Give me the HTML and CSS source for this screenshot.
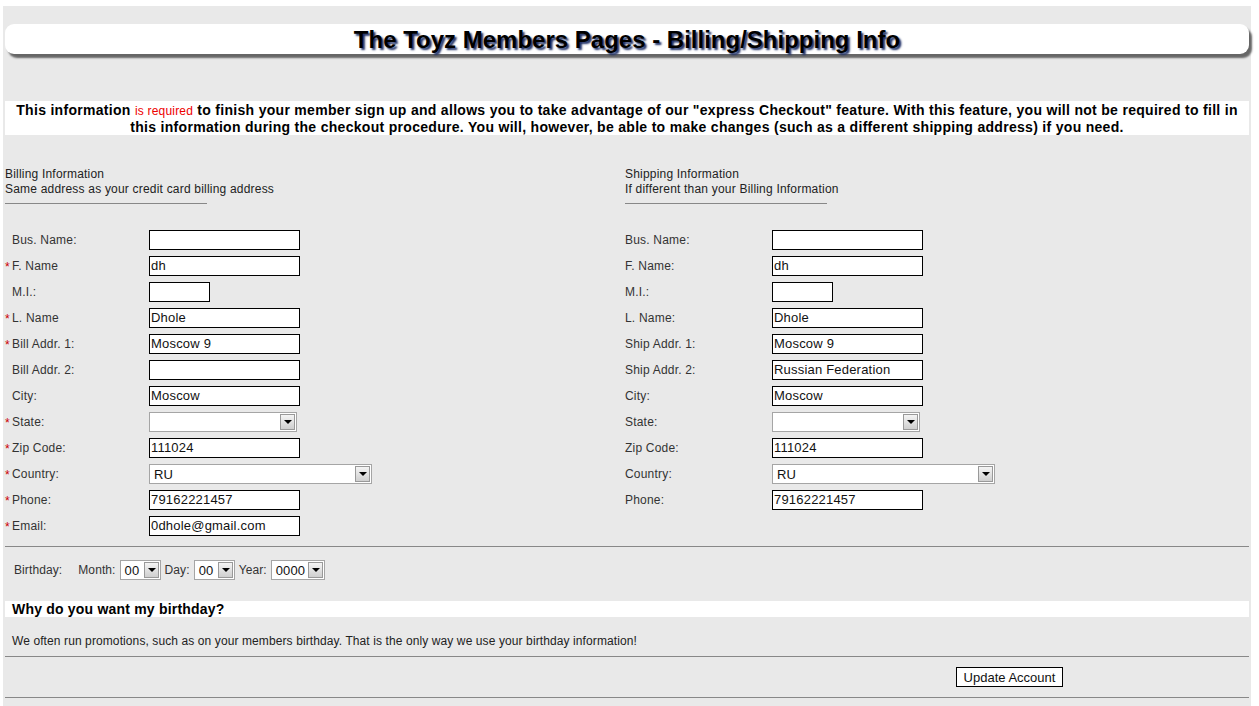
FILE: index.html
```html
<!DOCTYPE html>
<html lang="en">
<head>
    <meta charset="UTF-8">
    <title>The Toyz Members Pages - Billing/Shipping Info</title>
    <link rel="stylesheet" href="styles.css">
</head>
<body>
    <div class="page">
        <div class="title-bar">
            <h1>The Toyz Members Pages - Billing/Shipping Info</h1>
        </div>

        <p class="intro">This information <span class="req-text">is required</span> to finish your member sign up and allows you to take advantage of our "express Checkout" feature. With this feature, you will not be required to fill in<br>this information during the checkout procedure. You will, however, be able to make changes (such as a different shipping address) if you need.</p>

        <div class="columns">
            <div class="col">
                <div class="col-head">
                    Billing Information<br>
                    Same address as your credit card billing address
                </div>
                <div class="rows">
                    <div class="row"><span class="lbl">Bus. Name:</span><span class="field"></span></div>
                    <div class="row"><span class="lbl req">F. Name</span><span class="field">dh</span></div>
                    <div class="row"><span class="lbl">M.I.:</span><span class="field small"></span></div>
                    <div class="row"><span class="lbl req">L. Name</span><span class="field">Dhole</span></div>
                    <div class="row"><span class="lbl req">Bill Addr. 1:</span><span class="field">Moscow 9</span></div>
                    <div class="row"><span class="lbl">Bill Addr. 2:</span><span class="field"></span></div>
                    <div class="row"><span class="lbl">City:</span><span class="field">Moscow</span></div>
                    <div class="row"><span class="lbl req">State:</span><span class="select state"><span class="val"></span><span class="arrow"></span></span></div>
                    <div class="row"><span class="lbl req">Zip Code:</span><span class="field">111024</span></div>
                    <div class="row"><span class="lbl req">Country:</span><span class="select country"><span class="val">RU</span><span class="arrow"></span></span></div>
                    <div class="row"><span class="lbl req">Phone:</span><span class="field">79162221457</span></div>
                    <div class="row"><span class="lbl req">Email:</span><span class="field">0dhole@gmail.com</span></div>
                </div>
            </div>

            <div class="col ship">
                <div class="col-head">
                    Shipping Information<br>
                    If different than your Billing Information
                </div>
                <div class="rows">
                    <div class="row"><span class="lbl">Bus. Name:</span><span class="field"></span></div>
                    <div class="row"><span class="lbl">F. Name:</span><span class="field">dh</span></div>
                    <div class="row"><span class="lbl">M.I.:</span><span class="field small"></span></div>
                    <div class="row"><span class="lbl">L. Name:</span><span class="field">Dhole</span></div>
                    <div class="row"><span class="lbl">Ship Addr. 1:</span><span class="field">Moscow 9</span></div>
                    <div class="row"><span class="lbl">Ship Addr. 2:</span><span class="field">Russian Federation</span></div>
                    <div class="row"><span class="lbl">City:</span><span class="field">Moscow</span></div>
                    <div class="row"><span class="lbl">State:</span><span class="select state"><span class="val"></span><span class="arrow"></span></span></div>
                    <div class="row"><span class="lbl">Zip Code:</span><span class="field">111024</span></div>
                    <div class="row"><span class="lbl">Country:</span><span class="select country"><span class="val">RU</span><span class="arrow"></span></span></div>
                    <div class="row"><span class="lbl">Phone:</span><span class="field">79162221457</span></div>
                </div>
            </div>
        </div>

        <hr class="rule">

        <div class="birthday">
            <span class="bday-lbl">Birthday:</span>
            <span>Month:</span>
            <span class="select mini"><span class="val">00</span><span class="arrow"></span></span>
            <span>Day:</span>
            <span class="select mini"><span class="val">00</span><span class="arrow"></span></span>
            <span>Year:</span>
            <span class="select year"><span class="val">0000</span><span class="arrow"></span></span>
        </div>

        <h2 class="why">Why do you want my birthday?</h2>
        <p class="why-text">We often run promotions, such as on your members birthday. That is the only way we use your birthday information!</p>

        <hr class="rule">

        <div class="actions">
            <button class="update-btn" type="button">Update Account</button>
        </div>

        <hr class="rule">
    </div>
</body>
</html>
```

FILE: styles.css
```css
body {
    margin: 0;
    background-color: #fff;
    font-family: "Liberation Sans", Arial, sans-serif;
    font-size: 12px;
    color: #222;
}

.page {
    margin: 6px 8px 0 3px;
    padding: 18px 2px 8px 2px;
    background-color: #e9e9e9;
    min-height: 700px;
}

.title-bar {
    background-color: #fff;
    border-radius: 9px;
    height: 30px;
    box-shadow: 3px 4px 2px #666;
    text-align: center;
}

.title-bar h1 {
    margin: 0;
    font-size: 24px;
    line-height: 31px;
    color: #000;
    text-shadow: 2px 2px 2px #1e2f66;
}

.intro {
    margin: 47px 0 0 0;
    background-color: #fff;
    text-align: center;
    font-weight: bold;
    font-size: 14px;
    letter-spacing: 0.3px;
    line-height: 16px;
    padding: 1px 0 0 0;
    color: #000;
}

.req-text {
    color: #e00;
    font-weight: normal;
    font-size: 12px;
    letter-spacing: 0.2px;
}

.columns {
    display: flex;
    margin-top: 32px;
    letter-spacing: 0.2px;
}

.col {
    width: 620px;
}

.col-head {
    line-height: 15px;
    color: #222;
    width: 202px;
    padding-bottom: 6px;
    border-bottom: 1px solid #888;
    white-space: nowrap;
}

.rows {
    margin-top: 23px;
}

.row {
    display: flex;
    align-items: center;
    height: 26px;
}

.lbl {
    width: 144px;
    padding-left: 7px;
    box-sizing: border-box;
    color: #333;
    position: relative;
}

.lbl.req::before {
    content: "*";
    color: #c00;
    position: absolute;
    left: 0;
    top: 1px;
}

.ship .lbl {
    width: 147px;
    padding-left: 0;
}

.field {
    display: block;
    box-sizing: border-box;
    width: 151px;
    height: 20px;
    border: 1px solid #000;
    background-color: #fff;
    font-size: 13px;
    line-height: 18px;
    padding-left: 1px;
    color: #111;
}

.field.small {
    width: 61px;
}

.select {
    display: inline-flex;
    box-sizing: border-box;
    height: 20px;
    border: 1px solid #a5a5a5;
    background-color: #fff;
    align-items: center;
    justify-content: space-between;
    padding: 1px;
}

.select .val {
    font-size: 13px;
    padding-left: 3px;
    color: #111;
}

.select .arrow {
    width: 15px;
    height: 16px;
    box-sizing: border-box;
    border: 1px solid #999;
    background: linear-gradient(#f4f4f4, #cfcfcf);
    position: relative;
}

.select .arrow::after {
    content: "";
    position: absolute;
    left: 3px;
    top: 5px;
    border-left: 4px solid transparent;
    border-right: 4px solid transparent;
    border-top: 4px solid #000;
}

.select.state {
    width: 148px;
}

.select.country {
    width: 223px;
}

.select.mini {
    width: 41px;
}

.select.year {
    width: 54px;
}

.rule {
    border: none;
    border-top: 1px solid #888;
    margin: 0;
}

.columns + .rule {
    margin-top: 7px;
}

.birthday {
    display: flex;
    align-items: center;
    gap: 4px;
    height: 22px;
    margin-top: 12px;
    padding-left: 9px;
    color: #333;
    letter-spacing: 0.1px;
}

.bday-lbl {
    margin-right: 12px;
}

.why {
    margin: 20px 0 0 0;
    background-color: #fff;
    font-size: 14px;
    letter-spacing: 0.2px;
    line-height: 16px;
    padding-left: 7px;
    color: #000;
}

.why-text {
    margin: 17px 0 0 0;
    padding-left: 7px;
    line-height: 14px;
    color: #222;
    letter-spacing: 0.1px;
}

.why-text + .rule {
    margin-top: 8px;
}

.actions {
    display: flex;
    justify-content: flex-end;
    padding: 10px 186px 10px 0;
}

.update-btn {
    font-family: "Liberation Sans", Arial, sans-serif;
    font-size: 13px;
    background-color: #fff;
    border: 1px solid #000;
    padding: 1px 6px;
    height: 20px;
    width: 107px;
    color: #111;
}
```
